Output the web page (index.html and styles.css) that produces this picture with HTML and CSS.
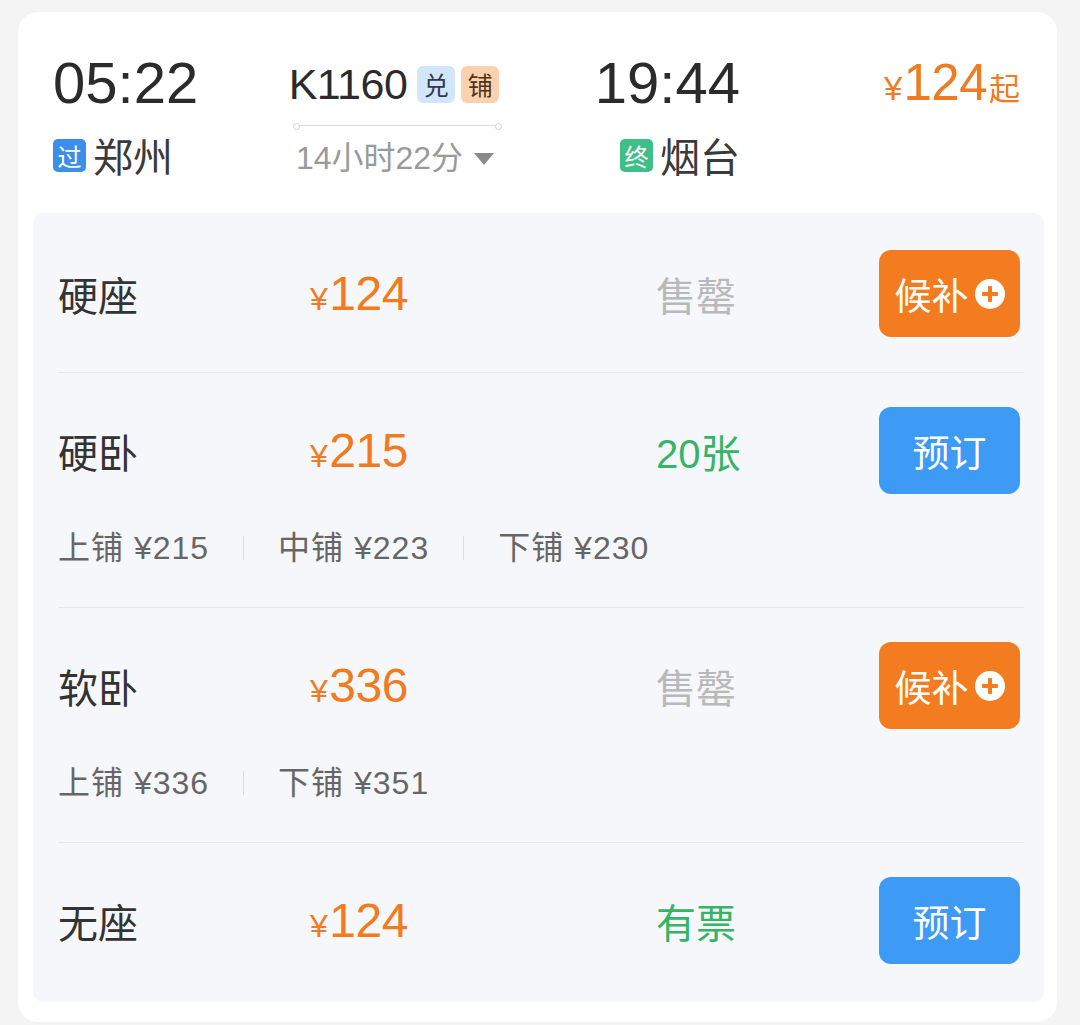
FILE: index.html
```html
<!DOCTYPE html>
<html lang="zh-CN">
<head>
<meta charset="utf-8">
<link rel="stylesheet" href="styles.css">
</head>
<body>
<div class="card">
  <div class="hdr">
    <div class="dep">
      <div class="time">05:22</div>
      <div class="station"><span class="tag tag-blue">过</span><span class="sname">郑州</span></div>
    </div>
    <div class="train">
      <div class="tno">K1160<span class="mini mini-blue">兑</span><span class="mini mini-orange">铺</span></div>
      <div class="track"></div>
      <div class="dur">14小时22分<span class="tri"></span></div>
    </div>
    <div class="arr">
      <div class="time">19:44</div>
      <div class="station"><span class="tag tag-green">终</span><span class="sname">烟台</span></div>
    </div>
    <div class="lowest"><span class="yen">¥</span><span class="num">124</span><span class="qi">起</span></div>
  </div>

  <div class="panel">
    <div class="seat">
      <div class="main">
        <span class="sname2">硬座</span>
        <span class="price"><span class="yen">¥</span>124</span>
        <span class="status sold">售罄</span>
        <span class="btn btn-orange">候补<span class="plus"></span></span>
      </div>
    </div>
    <div class="seat">
      <div class="main">
        <span class="sname2">硬卧</span>
        <span class="price"><span class="yen">¥</span>215</span>
        <span class="status avail">20张</span>
        <span class="btn btn-blue">预订</span>
      </div>
      <div class="sub">
        <span>上铺 ¥215</span><i class="bar"></i><span>中铺 ¥223</span><i class="bar"></i><span>下铺 ¥230</span>
      </div>
    </div>
    <div class="seat">
      <div class="main">
        <span class="sname2">软卧</span>
        <span class="price"><span class="yen">¥</span>336</span>
        <span class="status sold">售罄</span>
        <span class="btn btn-orange">候补<span class="plus"></span></span>
      </div>
      <div class="sub">
        <span>上铺 ¥336</span><i class="bar"></i><span>下铺 ¥351</span>
      </div>
    </div>
    <div class="seat last">
      <div class="main">
        <span class="sname2">无座</span>
        <span class="price"><span class="yen">¥</span>124</span>
        <span class="status avail">有票</span>
        <span class="btn btn-blue">预订</span>
      </div>
    </div>
  </div>
</div>
</body>
</html>
```

FILE: styles.css
```css
* { box-sizing: border-box; }
html, body { margin: 0; }
body {
  background: #f4f4f4;
  padding: 12px 23px 3px 18px;
  font-family: "Liberation Sans", "Noto Sans CJK SC", sans-serif;
  color: #333;
}
.card {
  background: #fff;
  border-radius: 20px;
  padding: 36px 13px 20px 15px;
}
.hdr {
  display: flex;
  padding: 0 24px 0 20px;
  height: 165px;
}
.dep { width: 235px; }
.time {
  font-size: 58px;
  line-height: 70px;
  height: 70px;
  color: #2b2b2b;
}
.station {
  margin-top: 17px;
  display: flex;
  align-items: center;
  height: 40px;
}
.tag {
  width: 33px; height: 33px;
  border-radius: 5px;
  color: #fff;
  font-size: 24px;
  line-height: 33px;
  text-align: center;
  font-family: "Noto Sans CJK SC", sans-serif;
  margin-right: 7px;
}
.tag-blue { background: #3c8fe8; }
.tag-green { background: #3dbf87; }
.sname {
  font-size: 40px;
  line-height: 40px;
  color: #3a3a3a;
  font-family: "Noto Sans CJK SC", sans-serif;
}
.train {
  width: 212px;
  display: flex;
  flex-direction: column;
  align-items: center;
}
.tno {
  font-size: 43px;
  line-height: 70px;
  height: 70px;
  display: flex;
  align-items: center;
  color: #2b2b2b;
  letter-spacing: -0.5px;
  padding-top: 2px;
}
.mini {
  width: 38px; height: 37px;
  border-radius: 6px;
  font-size: 25px;
  line-height: 37px;
  text-align: center;
  font-family: "Noto Sans CJK SC", sans-serif;
  margin-left: 6px;
  letter-spacing: 0;
}
.mini-blue { background: #d3e5fb; color: #2e3b4c; margin-left: 10px; }
.mini-orange { background: #fcd2ae; color: #4d3320; }
.track {
  position: relative;
  width: 205px;
  height: 1px;
  background: #dcdcdc;
  margin-top: 7px;
  margin-left: 6px;
}
.track::before, .track::after {
  content: "";
  position: absolute;
  top: -2px;
  width: 5px; height: 5px;
  border-radius: 50%;
  border: 1px solid #cfcfcf;
  background: #fff;
}
.track::before { left: -2px; }
.track::after { right: -2px; }
.dur {
  margin-top: 14px;
  font-size: 32px;
  line-height: 36px;
  color: #9a9a9a;
  display: flex;
  align-items: center;
  margin-left: 2px;
}
.tri {
  width: 0; height: 0;
  border-left: 10px solid transparent;
  border-right: 10px solid transparent;
  border-top: 12px solid #8a8a8a;
  margin-left: 11px;
  margin-top: 2px;
}
.arr {
  margin-left: 97px;
  width: 143px;
  display: flex;
  flex-direction: column;
  align-items: flex-end;
}
.lowest {
  flex: 1;
  text-align: right;
  color: #f07b20;
  line-height: 70px;
  height: 70px;
  white-space: nowrap;
}
.lowest .yen { font-size: 33px; margin-right: 1px; }
.lowest .num { font-size: 51px; letter-spacing: -0.5px; }
.lowest .qi { font-size: 31px; font-family: "Noto Sans CJK SC", sans-serif; margin-left: 2px; }

.panel {
  background: #f6f7fa;
  border-radius: 10px;
  padding: 3px 20px 3px 25px;
}
.seat {
  padding: 34px 0 35px;
  border-bottom: 1px solid #e7e8eb;
}
.seat.last { border-bottom: none; }
.main {
  display: grid;
  grid-template-columns: 252px 346px 1fr 141px;
  align-items: center;
  height: 87px;
  margin-right: 4px;
}
.sname2 {
  font-size: 40px;
  color: #333;
  font-family: "Noto Sans CJK SC", sans-serif;
}
.price {
  color: #f07b20;
  font-size: 48px;
  letter-spacing: -0.5px;
}
.price .yen { font-size: 32px; margin-right: 2px; }
.status {
  font-size: 40px;
}
.sold { color: #b9b9b9; font-family: "Noto Sans CJK SC", sans-serif; }
.avail { color: #36b466; }
.btn {
  height: 87px;
  border-radius: 12px;
  color: #fff;
  font-size: 37px;
  font-family: "Noto Sans CJK SC", sans-serif;
  display: flex;
  align-items: center;
  justify-content: center;
}
.btn-orange { background: #f47c20; }
.btn-blue { background: #3d9af5; }
.plus {
  position: relative;
  width: 30px; height: 30px;
  border-radius: 50%;
  background: #fff;
  margin-left: 6px;
}
.plus::before, .plus::after {
  content: "";
  position: absolute;
  background: #f47c20;
  border-radius: 1px;
}
.plus::before { left: 7px; right: 7px; top: 13px; height: 4px; }
.plus::after { top: 7px; bottom: 7px; left: 13px; width: 4px; }
.sub {
  margin-top: 31px;
  margin-bottom: 7px;
  height: 40px;
  display: flex;
  align-items: center;
  gap: 34px;
  font-size: 32px;
  letter-spacing: 1px;
  color: #666;
  white-space: nowrap;
}
.bar {
  display: block;
  width: 1px;
  height: 24px;
  background: #dcdcdc;
  margin-top: 6px;
}
```
